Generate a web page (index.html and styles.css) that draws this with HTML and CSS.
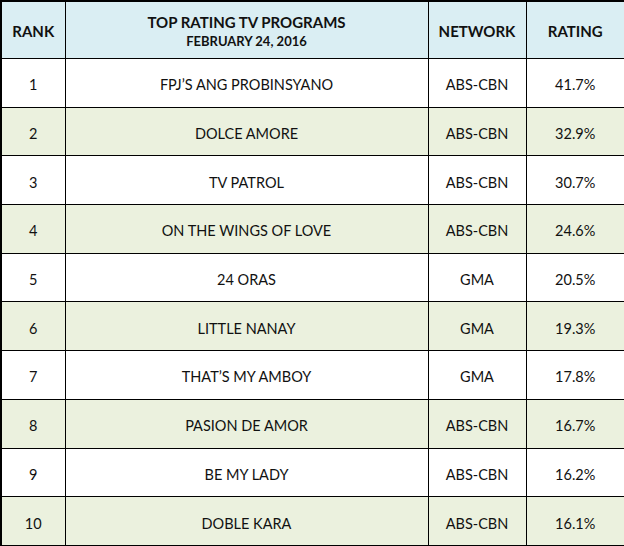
FILE: index.html
```html
<!DOCTYPE html>
<html>
<head>
<meta charset="utf-8">
<link rel="stylesheet" href="styles.css">
</head>
<body>
<table class="ratings">
  <colgroup>
    <col class="c-rank">
    <col class="c-prog">
    <col class="c-net">
    <col class="c-rate">
  </colgroup>
  <thead>
    <tr class="head">
      <th>RANK</th>
      <th><div class="title">TOP RATING TV PROGRAMS</div><div class="date">FEBRUARY 24, 2016</div></th>
      <th>NETWORK</th>
      <th>RATING</th>
    </tr>
  </thead>
  <tbody>
    <tr><td>1</td><td>FPJ’S ANG PROBINSYANO</td><td>ABS-CBN</td><td>41.7%</td></tr>
    <tr class="alt"><td>2</td><td>DOLCE AMORE</td><td>ABS-CBN</td><td>32.9%</td></tr>
    <tr><td>3</td><td>TV PATROL</td><td>ABS-CBN</td><td>30.7%</td></tr>
    <tr class="alt"><td>4</td><td>ON THE WINGS OF LOVE</td><td>ABS-CBN</td><td>24.6%</td></tr>
    <tr><td>5</td><td>24 ORAS</td><td>GMA</td><td>20.5%</td></tr>
    <tr class="alt"><td>6</td><td>LITTLE NANAY</td><td>GMA</td><td>19.3%</td></tr>
    <tr><td>7</td><td>THAT’S MY AMBOY</td><td>GMA</td><td>17.8%</td></tr>
    <tr class="alt"><td>8</td><td>PASION DE AMOR</td><td>ABS-CBN</td><td>16.7%</td></tr>
    <tr><td>9</td><td>BE MY LADY</td><td>ABS-CBN</td><td>16.2%</td></tr>
    <tr class="alt"><td>10</td><td>DOBLE KARA</td><td>ABS-CBN</td><td>16.1%</td></tr>
  </tbody>
</table>
</body>
</html>
```

FILE: styles.css
```css
html, body {
  margin: 0;
  padding: 0;
  background: #ffffff;
}

.ratings {
  border-collapse: collapse;
  width: 624px;
  table-layout: fixed;
  font-family: Lato, "Open Sans", "Liberation Sans", sans-serif;
  color: #111;
  border: 2px solid #000;
}

.c-rank { width: 64px; }
.c-prog { width: 363px; }
.c-net { width: 98px; }
.c-rate { width: 99px; }

.ratings th,
.ratings td {
  border: 1px solid #000;
  text-align: center;
  vertical-align: middle;
  padding: 0;
}

.head th {
  background: #daeef3;
  height: 55px;
  font-size: 15px;
  font-weight: 700;
  padding-top: 1px;
}

.title {
  font-size: 15px;
  font-weight: 700;
  line-height: 20px;
}

.date {
  font-size: 13px;
  font-weight: 700;
  line-height: 18px;
}

.ratings td {
  height: 43.7px;
  font-size: 14.5px;
  font-weight: 400;
  padding-top: 4px;
}

.alt td {
  background: #ebf1de;
}
```
